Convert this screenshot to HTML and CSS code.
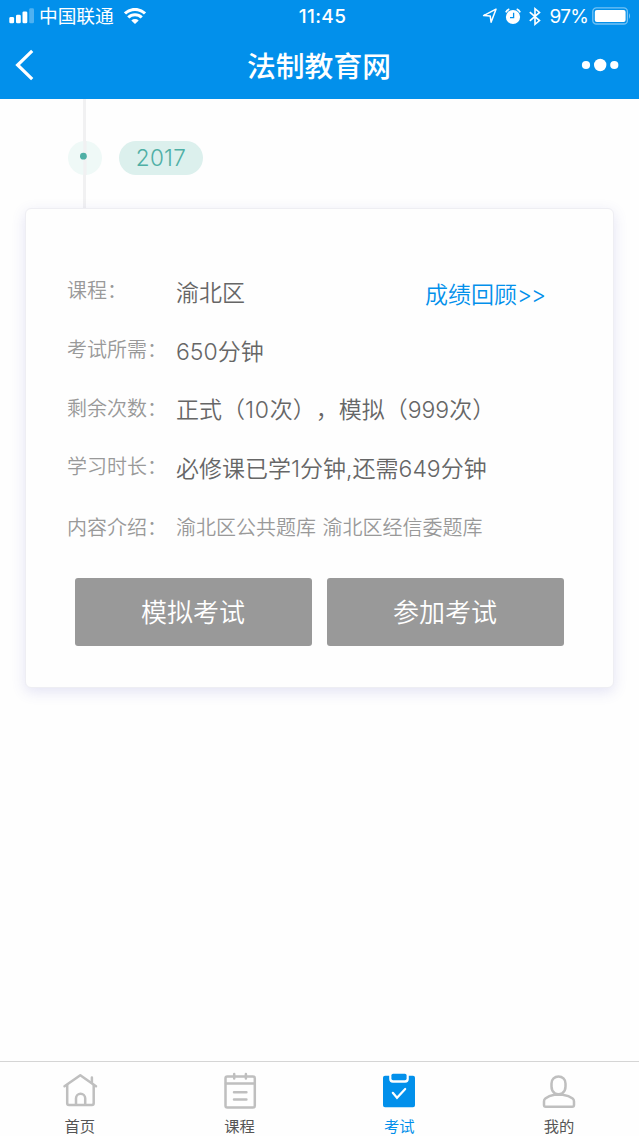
FILE: index.html
```html
<!DOCTYPE html>
<html lang="zh-CN">
<head>
  <meta charset="UTF-8">
  <title>法制教育网</title>
  <meta name="viewport" content="width=device-width, initial-scale=1">
  <link rel="stylesheet" href="styles.css">
</head>
<body>

  <!-- 顶部 -->
  <header class="header">
    <div class="status">
      <div class="status-left">
        <svg width="26" height="16" viewBox="0 0 26 16" fill="#fff">
          <rect x="0.3" y="9" width="4.8" height="6.3" rx="1.4"/>
          <rect x="7" y="6.7" width="4.8" height="8.6" rx="1.4"/>
          <rect x="13.5" y="3.4" width="4.8" height="11.9" rx="1.4"/>
          <rect x="20.2" y="0.2" width="4.8" height="15.1" rx="1.4" opacity=".3"/>
        </svg>
        <span class="carrier">中国联通</span>
        <svg class="wifi" width="22" height="16" viewBox="0 0 22 16" fill="none" stroke="#fff" stroke-width="3.1">
          <path d="M1 5.5a14.3 14.3 0 0 1 20 0"/>
          <path d="M4.3 9.5a9.4 9.4 0 0 1 13.4 0"/>
          <path d="M7.3 12.5a5.4 5.4 0 0 1 7.4 0L11 16z" fill="#fff" stroke="none"/>
        </svg>
      </div>
      <div class="time">11:45</div>
      <div class="status-right">
        <svg width="15" height="16" viewBox="0 0 15 16" fill="none" stroke="#fff" stroke-width="1.5" stroke-linejoin="round">
          <path d="M14 1.2L1.6 7.6l6.600.3.9 6.300z"/>
        </svg>
        <svg class="alarm" width="16" height="17" viewBox="0 0 16 17" fill="none" stroke="#fff">
          <circle cx="8" cy="9" r="7.1" fill="#fff" stroke="none"/>
          <path d="M.9 4.4Q1.8 2 4.3 1.2M15.1 4.4Q14.2 2 11.7 1.2" stroke-width="1.8"/>
          <path d="M8.6 4.8v4.9H5" stroke="#0290eb" stroke-width="1.3"/>
        </svg>
        <svg class="bluetooth" width="12" height="19" viewBox="0 0 12 19" fill="none" stroke="#fff" stroke-width="1.6">
          <path d="M.8 5.2L10.5 13.6 6 17.3V1.7l4.5 3.7L.8 13.8"/>
        </svg>
        <span class="percent">97%</span>
        <svg width="39" height="18" viewBox="0 0 39 18" fill="#fff">
          <rect x=".8" y=".8" width="34.6" height="16.2" rx="3.6" fill="none" stroke="#fff" stroke-opacity=".45" stroke-width="1.3"/>
          <rect x="2.8" y="2.9" width="30.8" height="12" rx="2"/>
          <path d="M37 6q2.2 3 0 6z" opacity=".45"/>
        </svg>
      </div>
    </div>
    <div class="navbar">
      <svg class="back" width="20" height="32" viewBox="0 0 20 32" fill="none" stroke="#fff" stroke-width="3.2">
        <path d="M17.2 1.8L2.6 16l14.6 14.2"/>
      </svg>
      <h1 class="title">法制教育网</h1>
      <svg class="more" width="38" height="14" viewBox="0 0 38 14" fill="#fff">
        <circle cx="5" cy="7" r="4.1"/>
        <circle cx="19.2" cy="7" r="6.2"/>
        <circle cx="33.3" cy="7" r="4.1"/>
      </svg>
    </div>
  </header>

  <main class="main">
    <!-- 时间轴 -->
    <div class="timeline">
      <svg class="node" width="34" height="34" viewBox="0 0 34 34">
        <circle cx="17" cy="17" r="17" fill="#eff9f7"/>
        <rect x="15.3" width="3.3" height="34" fill="#f1f1f2"/>
        <circle cx="15.4" cy="15.2" r="3.4" fill="#4fafa5"/>
      </svg>
      <span class="year">2017</span>
    </div>

    <!-- 考试信息 -->
    <section class="card">
      <div class="row">
        <span class="label">课程：</span>
        <span class="value">渝北区</span>
        <a class="review">成绩回顾<span class="arrows">&gt;&gt;</span></a>
      </div>
      <div class="row">
        <span class="label">考试所需：</span>
        <span class="value">650分钟</span>
      </div>
      <div class="row">
        <span class="label">剩余次数：</span>
        <span class="value">正式（<span class="times">10</span>次），模拟（999次）</span>
      </div>
      <div class="row">
        <span class="label">学习时长：</span>
        <span class="value">必修课已学1分钟,还需649分钟</span>
      </div>
      <div class="row intro">
        <span class="label">内容介绍：</span>
        <span class="value">渝北区公共题库 渝北区经信委题库</span>
      </div>
      <div class="buttons">
        <button class="btn">模拟考试</button>
        <button class="btn">参加考试</button>
      </div>
    </section>
  </main>

  <!-- 底部导航 -->
  <nav class="tabbar">
    <a class="tab">
      <svg width="40" height="40" viewBox="0 0 40 40" fill="none" stroke="#bfbfbf" stroke-width="2.5" stroke-linecap="round" stroke-linejoin="round">
        <path d="M4.5 16.2L20.3 5.2 36 16.2"/>
        <path d="M7.2 15V33.3q0 1.7 1.7 1.7H32q1.7 0 1.7-1.7V15M31.9 7.5v5.5"/>
        <path d="M16 34.5v-6.2a4.6 4.6 0 0 1 9.2 0v6.2"/>
      </svg>
      <span>首页</span>
    </a>
    <a class="tab">
      <svg width="40" height="40" viewBox="0 0 40 40" fill="none" stroke="#bfbfbf" stroke-width="2.5" stroke-linecap="round" stroke-linejoin="round">
        <rect x="5.5" y="6.4" width="29.3" height="31.2" rx="1.8"/>
        <path d="M6 13.5h28.5M14.2 4v4.5M25.9 4v4.5M14 22.3h12.4M14 29.5h12.4"/>
      </svg>
      <span>课程</span>
    </a>
    <a class="tab active">
      <svg width="40" height="40" viewBox="0 0 40 40">
        <path fill="#0290eb" d="M6 5.7h4.2v3.4q0 3.6 3.6 3.6h12.4q3.6 0 3.6-3.6V5.7H34q2 0 2 2v27.6q0 2-2 2H6q-2 0-2-2V7.7q0-2 2-2z"/>
        <rect x="12.4" y="3.7" width="15.2" height="6.5" rx="1.7" fill="#0290eb"/>
        <path d="M13.8 22.8l4.2 5 8.2-8.8" fill="none" stroke="#fff" stroke-width="2.2" stroke-linecap="round"/>
      </svg>
      <span>考试</span>
    </a>
    <a class="tab">
      <svg width="40" height="40" viewBox="0 0 40 40" fill="none" stroke="#bfbfbf" stroke-width="2.5" stroke-linejoin="round">
        <path d="M12.5 13.4a7 7 0 0 1 14 0v3q0 4.2-3 6.6-4 2.4-8 0-3-2.4-3-6.6z"/>
        <path d="M15.3 24.7Q10 25.7 6.3 28.5 5 29.4 5 31.5V35q0 1.8 1.8 1.8h26.4Q35 36.8 35 35v-3.5q0-2.1-1.3-3Q30 25.7 23.7 24.7z"/>
      </svg>
      <span>我的</span>
    </a>
  </nav>

</body>
</html>
```
FILE: styles.css
```css
* {
  box-sizing: border-box;
}

body {
  margin: 0;
  height: 1136px;
  display: flex;
  flex-direction: column;
  background: #fefefe;
  font-family: Inter, "Noto Sans CJK SC", sans-serif;
  color: #666;
  text-spacing-trim: space-all;
  overflow: hidden;
}

svg {
  display: block;
  flex: none;
}

/* 顶部 */
.header {
  height: 98.5px;
  background: #0290eb;
  color: #fff;
}

.status {
  height: 32px;
  display: grid;
  grid-template-columns: 1fr auto 1fr;
  align-items: center;
  padding: 0 8px 0 9px;
}

.status-left,
.status-right {
  display: flex;
  align-items: center;
}

.carrier {
  margin: 2px 0 0 4px;
  font-size: 18.7px;
  line-height: 30px;
}

.wifi {
  margin-left: 10px;
}

.time {
  padding-left: 5px;
  font-size: 19px;
  font-weight: 500;
  letter-spacing: 0.4px;
}

.status-right {
  justify-content: flex-end;
}

.alarm {
  margin-left: 8px;
}

.bluetooth {
  margin-left: 8px;
}

.percent {
  margin: 1px 4px 0 9px;
  font-size: 19px;
  letter-spacing: -0.8px;
}

.navbar {
  height: 66px;
  display: flex;
  align-items: center;
  justify-content: space-between;
  padding: 0 20px 0 15px;
}

.title {
  margin: 3px 0 0 22px;
  font-size: 28.8px;
  font-weight: 500;
  line-height: 40px;
}

/* 时间轴 */
.main {
  flex: 1;
}

.timeline {
  height: 109.5px;
  display: flex;
  align-items: center;
  padding: 9px 0 0 68px;
  background: linear-gradient(#f1f1f2, #f1f1f2) 83.3px 0 / 3.3px 100% no-repeat;
}

.year {
  width: 84px;
  height: 34px;
  margin-left: 17px;
  border-radius: 17px;
  background: #dcf0ed;
  color: #4fafa5;
  font-size: 22.5px;
  font-weight: 300;
  letter-spacing: 0.3px;
  line-height: 33px;
  text-align: center;
}

/* 卡片 */
.card {
  height: 479.5px;
  margin: 0 25px;
  padding: 53px 41px 0;
  border: 1px solid #eeeef3;
  border-radius: 6px;
  background: #fefefe;
  box-shadow: 0 4px 14px rgba(90, 90, 190, 0.16);
}

.row {
  height: 58.7px;
  display: flex;
  align-items: center;
  white-space: nowrap;
}

.label {
  width: 109px;
  padding-bottom: 3px;
  font-size: 20px;
  font-weight: 350;
  color: #999;
}

.value {
  padding-bottom: 1px;
  font-size: 23px;
  font-weight: 350;
  color: #666;
}

.times {
  letter-spacing: 0.7px;
}

.review {
  margin: 3px 27px 0 auto;
  font-size: 23px;
  font-weight: 350;
  color: #0290eb;
}

.arrows {
  letter-spacing: -1px;
}

.intro .label {
  padding-bottom: 0;
}

.intro .value {
  padding-bottom: 0;
  font-size: 20px;
  word-spacing: 1px;
  color: #999;
}

.buttons {
  display: flex;
  gap: 15px;
  padding: 22.5px 8px 0;
}

.btn {
  width: 237px;
  height: 68px;
  padding: 0 1px 2px 0;
  border: none;
  border-radius: 3px;
  background: #999;
  color: #fff;
  font-family: inherit;
  font-size: 26px;
  font-weight: 350;
}

/* 底部导航 */
.tabbar {
  height: 75px;
  display: flex;
  border-top: 1px solid #d5d5d5;
}

.tab {
  flex: 1;
  display: flex;
  flex-direction: column;
  align-items: center;
  padding-top: 8px;
  font-size: 15.3px;
  line-height: 20px;
  color: #555;
}

.tab span {
  margin-top: 7px;
}

.tab.active {
  color: #0290eb;
}
```
